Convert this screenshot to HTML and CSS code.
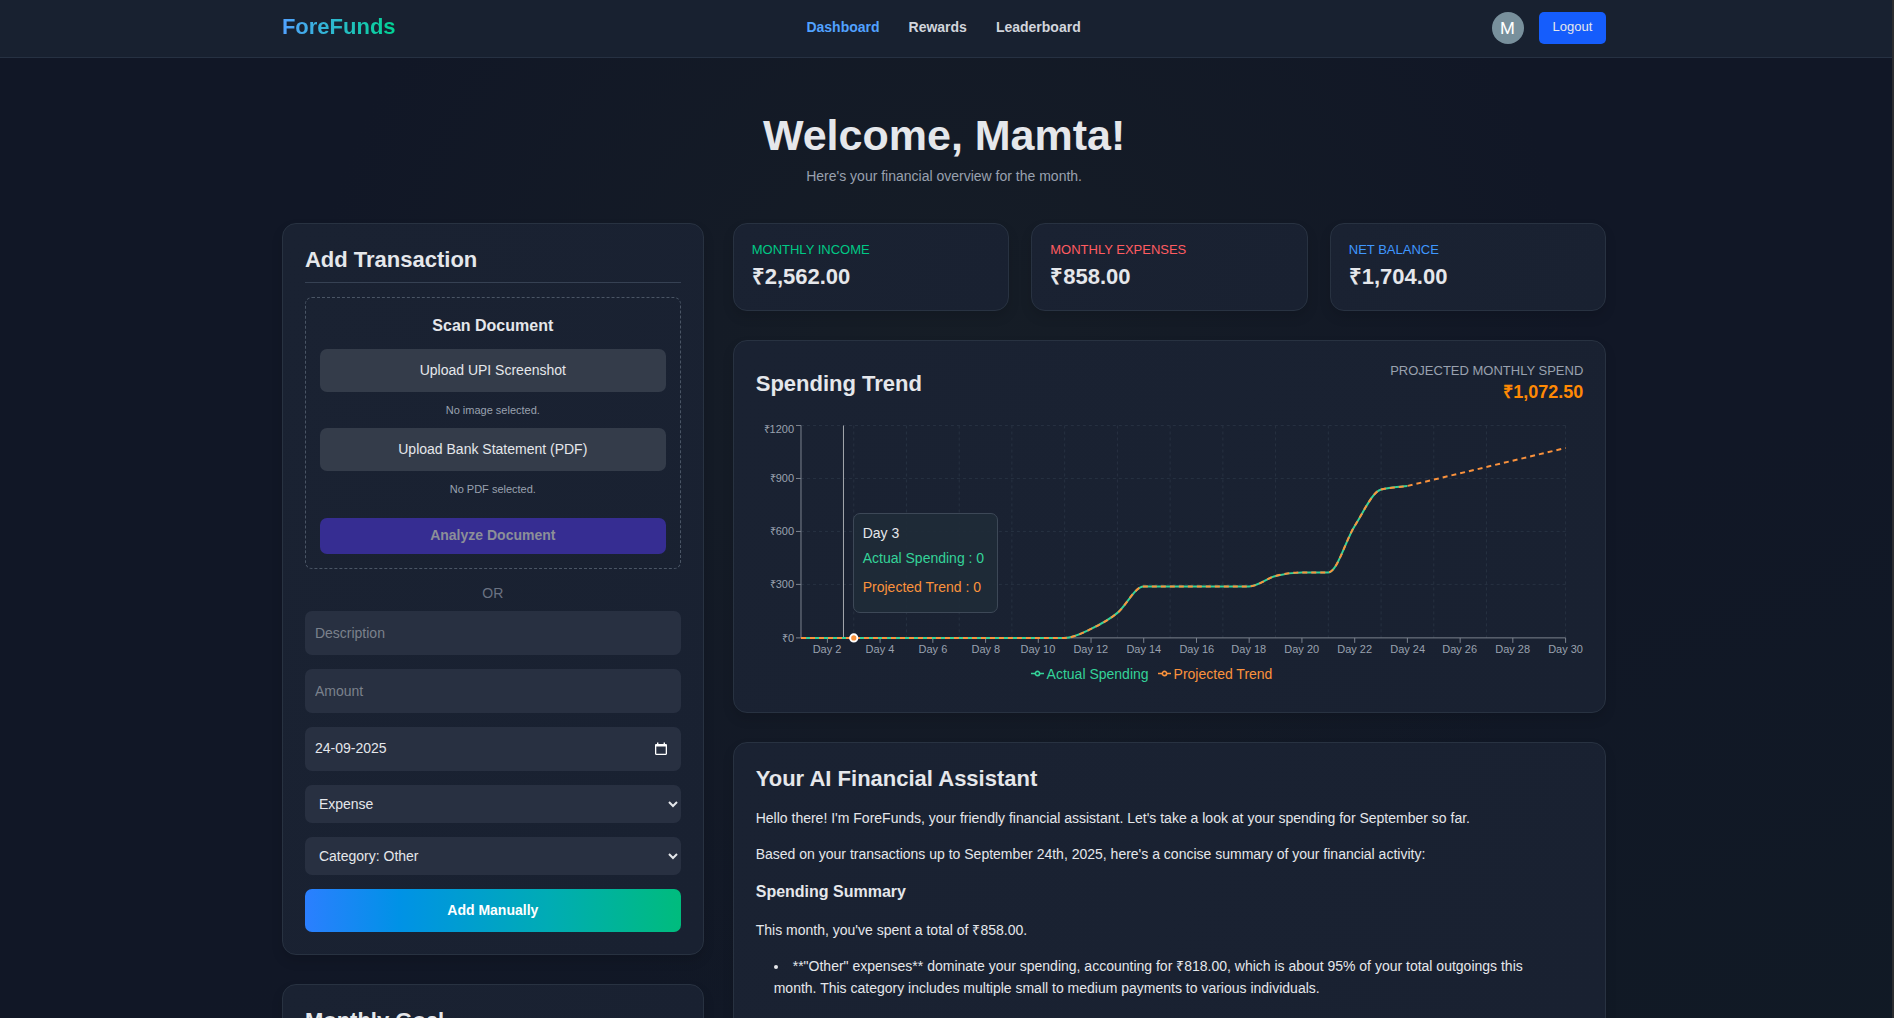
FILE: index.html
```html
<!DOCTYPE html>
<html lang="en">
<head>
<meta charset="utf-8">
<meta name="viewport" content="width=device-width, initial-scale=1">
<title>ForeFunds</title>
<link rel="stylesheet" href="styles.css">
</head>
<body>
<header class="topbar">
  <div class="container topbar-inner">
    <a class="logo" href="#">ForeFunds</a>
    <nav class="nav">
      <a class="nav-link active" href="#">Dashboard</a>
      <a class="nav-link" href="#">Rewards</a>
      <a class="nav-link" href="#">Leaderboard</a>
    </nav>
    <div class="account">
      <span class="avatar">M</span>
      <button class="logout" type="button">Logout</button>
    </div>
  </div>
</header>

<main class="container main">
  <div class="welcome">
    <h1>Welcome, Mamta!</h1>
    <p>Here's your financial overview for the month.</p>
  </div>

  <div class="columns">
    <div class="column">
      <section class="card">
        <h2 class="ruled">Add Transaction</h2>
        <div class="scan">
          <h3>Scan Document</h3>
          <button class="upload" type="button">Upload UPI Screenshot</button>
          <p class="note">No image selected.</p>
          <button class="upload" type="button">Upload Bank Statement (PDF)</button>
          <p class="note note-last">No PDF selected.</p>
          <button class="analyze" type="button" disabled>Analyze Document</button>
        </div>
        <p class="or">OR</p>
        <form class="form">
          <input class="field" type="text" placeholder="Description" aria-label="Description">
          <input class="field" type="text" inputmode="decimal" placeholder="Amount" aria-label="Amount">
          <div class="field date">
            <input type="text" value="24-09-2025" aria-label="Date">
            <button class="picker" type="button" aria-label="Open calendar">
              <svg width="12" height="14" viewBox="0 0 12 14"><path d="M2 .5h1.4V2h5.2V.5H10V2h.8c.7 0 1.2.5 1.2 1.2v8.6c0 .7-.5 1.2-1.2 1.2H1.200C.5 13 0 12.500 0 11.800V3.200C0 2.500.5 2 1.200 2H2zM1.300 4.600v7.100h9.400V4.600z" fill="#fff" fill-rule="evenodd"/></svg>
            </button>
          </div>
          <select class="field select" aria-label="Type"><option>Expense</option><option>Income</option></select>
          <select class="field select" aria-label="Category"><option>Category: Other</option></select>
          <button class="submit" type="button">Add Manually</button>
        </form>
      </section>

      <section class="card">
        <h2>Monthly Goal</h2>
      </section>
    </div>

    <div class="column">
      <div class="stats">
        <section class="card stat"><p class="label income">MONTHLY INCOME</p><p class="amount">₹2,562.00</p></section>
        <section class="card stat"><p class="label expenses">MONTHLY EXPENSES</p><p class="amount">₹858.00</p></section>
        <section class="card stat"><p class="label balance">NET BALANCE</p><p class="amount">₹1,704.00</p></section>
      </div>

      <section class="card">
        <div class="trend-head">
          <h2>Spending Trend</h2>
          <div class="projection">
            <p class="label">PROJECTED MONTHLY SPEND</p>
            <p class="projected">₹1,072.50</p>
          </div>
        </div>
        <div class="chart">
          <svg class="plot" viewBox="0 0 828 238" role="img" aria-label="Spending by day">
            <g class="grid">
              <path d="M45 5.500H810M45 58.500H810M45 111.500H810M45 164.500H810"/>
              <path d="M97.800 5.500V218M150.500 5.500V218M203.300 5.500V218M256 5.500V218M308.800 5.500V218M361.600 5.500V218M414.300 5.500V218M467.100 5.500V218M519.800 5.500V218M572.600 5.500V218M625.400 5.500V218M678.100 5.500V218M730.900 5.500V218M810 5.500V218"/>
            </g>
            <g class="axis">
              <path d="M45 5.500V218H810M40 5.500H45M40 58.500H45M40 111.500H45M40 164.500H45M40 218H45"/>
              <path d="M71.400 218v5M124.100 218v5M176.900 218v5M229.700 218v5M282.400 218v5M335.200 218v5M387.900 218v5M440.700 218v5M493.400 218v5M546.200 218v5M599 218v5M651.700 218v5M704.500 218v5M757.200 218v5M810 218v5"/>
            </g>
            <g class="ticks ticks-y">
              <text x="38" y="13">₹1200</text><text x="38" y="62">₹900</text><text x="38" y="115">₹600</text><text x="38" y="168">₹300</text><text x="38" y="222">₹0</text>
            </g>
            <g class="ticks ticks-x">
              <text x="71" y="233">Day 2</text><text x="124" y="233">Day 4</text><text x="177" y="233">Day 6</text><text x="230" y="233">Day 8</text><text x="282" y="233">Day 10</text><text x="335" y="233">Day 12</text><text x="388" y="233">Day 14</text><text x="441" y="233">Day 16</text><text x="493" y="233">Day 18</text><text x="546" y="233">Day 20</text><text x="599" y="233">Day 22</text><text x="652" y="233">Day 24</text><text x="704" y="233">Day 26</text><text x="757" y="233">Day 28</text><text x="810" y="233">Day 30</text>
            </g>
            <path class="cursor" d="M87.500 5.500V218"/>
            <path class="line actual" d="M45 218H308.800C317.600 218 326.400 213.200 335.200 209S352.800 200.100 361.600 193S379.100 166.500 387.900 166.500H493.400C502.200 166.500 511 158.300 519.800 156S537.400 152.500 546.200 152.500H572.600C581.400 152.500 590.200 119.800 599 106S616.600 71.800 625.400 69.500S642.900 66.600 651.700 66"/>
            <path class="line forecast" d="M45 218H308.800C317.600 218 326.400 213.200 335.200 209S352.800 200.100 361.600 193S379.100 166.500 387.900 166.500H493.400C502.200 166.500 511 158.300 519.800 156S537.400 152.500 546.200 152.500H572.600C581.400 152.500 590.200 119.800 599 106S616.600 71.800 625.400 69.500S642.900 67.600 651.700 66L810 28"/>
            <circle class="dot" cx="97.800" cy="218" r="3.600"/>
          </svg>
          <div class="tooltip">
            <p>Day 3</p>
            <p class="green">Actual Spending : 0</p>
            <p class="orange">Projected Trend : 0</p>
          </div>
          <ul class="legend">
            <li class="green"><svg width="13" height="13" viewBox="0 0 32 32"><path d="M0 16h10.700a5.300 5.300 0 1 1 10.600 0H32M21.300 16a5.300 5.300 0 1 1-10.600 0" fill="none" stroke="currentColor" stroke-width="4"/></svg>Actual Spending</li>
            <li class="orange"><svg width="13" height="13" viewBox="0 0 32 32"><path d="M0 16h10.700a5.300 5.300 0 1 1 10.600 0H32M21.300 16a5.300 5.300 0 1 1-10.600 0" fill="none" stroke="currentColor" stroke-width="4"/></svg>Projected Trend</li>
          </ul>
        </div>
      </section>

      <section class="card assistant">
        <h2>Your AI Financial Assistant</h2>
        <p>Hello there! I'm ForeFunds, your friendly financial assistant. Let's take a look at your spending for September so far.</p>
        <p>Based on your transactions up to September 24th, 2025, here's a concise summary of your financial activity:</p>
        <h3>Spending Summary</h3>
        <p>This month, you've spent a total of ₹858.00.</p>
        <ul>
          <li>**"Other" expenses** dominate your spending, accounting for ₹818.00, which is about 95% of your total outgoings this month. This category includes multiple small to medium payments to various individuals.</li>
        </ul>
      </section>
    </div>
  </div>
</main>
</body>
</html>
```
FILE: styles.css
```css
* { box-sizing: border-box; }

html { background: #111726; }

body {
  margin: 0;
  border-right: 2px solid #2c2d30;
  background:
    radial-gradient(ellipse 34% 60% at 50% 36%, rgba(24, 32, 38, .7), rgba(24, 32, 38, 0)),
    linear-gradient(160deg, #111726 60%, #111a25);
  color: #e5e7eb;
  font: 14px/22px "Liberation Sans", Arial, sans-serif;
}

h1, h2, h3, p, ul { margin: 0; padding: 0; }
h2 { font-size: 22px; line-height: 28px; }
h3 { font-size: 16px; line-height: 26px; }
a { text-decoration: none; }

button, input, select {
  border: 0;
  color: inherit;
  font: inherit;
}

.container { margin: 0 15.1% 0 14.9%; }

/* Top bar */
.topbar {
  padding: 12px 0 13px;
  border-bottom: 1px solid #263142;
  background: #182130;
}
.topbar-inner {
  display: flex;
  align-items: center;
  justify-content: space-between;
}
.logo {
  padding-bottom: 2px;
  font-size: 22px;
  line-height: 28px;
  font-weight: 700;
  background: linear-gradient(90deg, #51a2ff, #00d492);
  background-clip: text;
  color: transparent;
}
.nav { display: flex; gap: 29px; padding-bottom: 2px; }
.nav-link { color: #d1d5dc; font-weight: 700; }
.nav-link.active { color: #51a2ff; }
.account { display: flex; align-items: center; gap: 15px; }
.avatar {
  width: 32px;
  height: 32px;
  border-radius: 50%;
  background: #78909c;
  color: #fff;
  font: 17px/32px Roboto, sans-serif;
  text-align: center;
}
.logout {
  height: 32px;
  padding: 0 14px 2px;
  border-radius: 5px;
  background: #155dfc;
  font-size: 13px;
}

/* Welcome */
.main { padding: 53px 0 40px; }
.welcome { margin-bottom: 36px; text-align: center; }
.welcome h1 { margin-bottom: 6px; font-size: 43px; line-height: 48px; }
.welcome p { color: #99a1af; }

/* Cards */
.columns {
  display: grid;
  grid-template-columns: 422fr 874fr;
  gap: 29px;
  align-items: start;
}
.column { display: flex; flex-direction: column; gap: 29px; }
.card {
  padding: 22px;
  border: 1px solid #283241;
  border-radius: 14px;
  background: linear-gradient(115deg, #1a2232, #192131);
  box-shadow: 0 6px 12px rgba(0, 0, 0, .12);
}

/* Add transaction */
.ruled {
  margin-bottom: 14px;
  padding-bottom: 8px;
  border-bottom: 1px solid #364153;
}
.scan {
  display: flex;
  flex-direction: column;
  padding: 14px;
  border: 1px dashed #4a5565;
  border-radius: 7px;
  text-align: center;
}
.scan h3 { margin-bottom: 9px; line-height: 28px; }
.upload, .analyze, .submit, .field { border-radius: 7px; }
.upload { height: 43px; padding: 0 14px 2px; background: #343c4a; }
.note {
  margin: 10px 0;
  color: #99a1af;
  font-size: 11px;
  line-height: 16px;
}
.note-last { margin-bottom: 21px; }
.analyze {
  height: 36px;
  padding-bottom: 3px;
  background: #362d92;
  color: #8c8f98;
  font-weight: 700;
}
.or { margin: 13px 0 7px; color: #6a7282; text-align: center; }
.form { display: flex; flex-direction: column; gap: 14px; }
.field {
  width: 100%;
  height: 44px;
  padding: 0 10px;
  background: #283041;
}
.field::placeholder { color: #7b818c; }
.date { display: flex; align-items: center; justify-content: space-between; padding-right: 14px; }
.date input { width: 120px; padding: 0 0 2px; background: none; }
.picker { display: flex; padding: 0; background: none; }
.select { height: 38px; }
.select option { background: #283041; }
.submit {
  height: 43px;
  padding-bottom: 2px;
  background: linear-gradient(90deg, #2b7fff, #0092e6 25%, #00acb4 65%, #00bc7d);
  color: #fff;
  font-weight: 700;
}

/* Stats */
.stats { display: grid; grid-template-columns: repeat(3, 1fr); gap: 22px; }
.stat { padding: 18px; }
.label { color: #99a1af; font-size: 13px; line-height: 16px; }
.income { color: #00c985; }
.expenses { color: #ff5c61; }
.balance { color: #3f97ff; }
.amount { margin-top: 3px; font-size: 22px; line-height: 31px; font-weight: 700; }

/* Trend chart */
.trend-head { display: flex; align-items: center; justify-content: space-between; }
.projection { text-align: right; }
.projected { color: #ff8904; font-size: 18px; line-height: 26px; font-weight: 700; }
.chart { position: relative; padding: 15px 0 5px; }
.plot { display: block; width: 100%; height: auto; }
.grid path { fill: none; stroke: #273141; stroke-dasharray: 3 3; }
.axis path { fill: none; stroke: #7c838f; }
.ticks { fill: #99a1af; font-size: 11px; }
.ticks-y { text-anchor: end; }
.ticks-x { text-anchor: middle; }
.cursor { stroke: #a5a8ae; }
.line { fill: none; stroke-width: 2; }
.actual { stroke: #34d399; }
.forecast { stroke: #fb923c; stroke-dasharray: 5 4; }
.dot { fill: #fb923c; stroke: #fff; stroke-width: 2; }
.green { color: #34d399; }
.orange { color: #fb923c; }
.tooltip {
  position: absolute;
  left: 97px;
  top: 108px;
  padding: 8px 13px 14px 9px;
  border: 1px solid #3d4857;
  border-radius: 7px;
  background: rgba(31, 43, 55, .9);
  white-space: nowrap;
}
.tooltip p + p { margin-top: 3px; }
.tooltip p + p + p { margin-top: 7px; }
.legend {
  display: flex;
  justify-content: center;
  gap: 9px;
  margin-top: 5px;
  padding-right: 36px;
  list-style: none;
}
.legend li { display: flex; align-items: center; gap: 3px; }

/* Assistant */
.assistant { display: flex; flex-direction: column; gap: 14px; padding-bottom: 36px; }
.assistant ul { padding: 0 18px; }
.assistant li { list-style-position: inside; }
```
